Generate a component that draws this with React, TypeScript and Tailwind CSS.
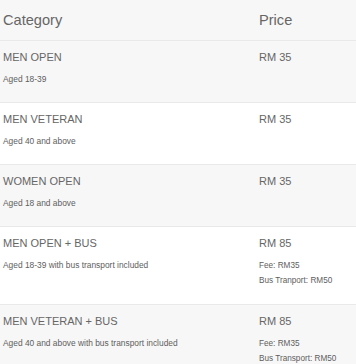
import React from 'react';

interface Row {
  readonly title: string;
  readonly note: string;
  readonly price: string;
  readonly breakdown?: readonly string[];
}

const rows: readonly Row[] = [
  { title: 'MEN OPEN', note: 'Aged 18-39', price: 'RM 35' },
  { title: 'MEN VETERAN', note: 'Aged 40 and above', price: 'RM 35' },
  { title: 'WOMEN OPEN', note: 'Aged 18 and above', price: 'RM 35' },
  {
    title: 'MEN OPEN + BUS',
    note: 'Aged 18-39 with bus transport included',
    price: 'RM 85',
    breakdown: ['Fee: RM35', 'Bus Tranport: RM50'],
  },
  {
    title: 'MEN VETERAN + BUS',
    note: 'Aged 40 and above with bus transport included',
    price: 'RM 85',
    breakdown: ['Fee: RM35', 'Bus Transport: RM50'],
  },
];

export default function App() {
  return (
    <div className="w-[356px] h-[364px] overflow-hidden bg-white text-[#666] font-['Liberation_Sans',Arial,sans-serif]">
      <div className="grid grid-cols-[256px_1fr] h-[40px] items-center bg-[#f7f7f7] text-[14.6px]">
        <div className="pl-[3px] pt-[2px]">Category</div>
        <div className="pl-[3px] pt-[2px]">Price</div>
      </div>
      {rows.map((row, i) => (
        <div
          key={row.title}
          className={
            'grid grid-cols-[256px_1fr] border-t border-[#e9e9e9] pt-2 pb-[15.5px] ' +
            (i % 2 === 0 ? 'bg-[#f7f7f7]' : 'bg-white')
          }
        >
          <div className="pl-[3px]">
            <div className="text-[11px] leading-[16px]">{row.title}</div>
            <div className="mt-[6.5px] text-[8.4px] leading-[15px] text-[#5e5e5e]">{row.note}</div>
          </div>
          <div className="pl-[3px]">
            <div className="text-[11px] leading-[16px]">{row.price}</div>
            {row.breakdown && (
              <div className="mt-[6.5px] text-[8.2px] leading-[15.5px] text-[#5e5e5e]">
                {row.breakdown.map((line) => (
                  <div key={line}>{line}</div>
                ))}
              </div>
            )}
          </div>
        </div>
      ))}
    </div>
  );
}
